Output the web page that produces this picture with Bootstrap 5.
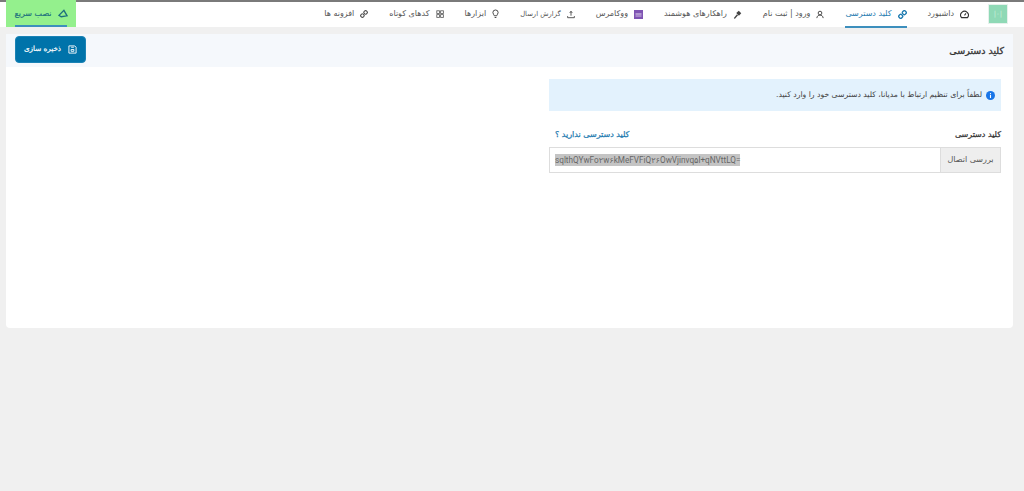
<!doctype html>
<html lang="fa" dir="rtl">
<head>
<meta charset="utf-8">
<title>کلید دسترسی</title>
<link rel="stylesheet" href="https://cdn.jsdelivr.net/npm/bootstrap@5.3.0/dist/css/bootstrap.min.css">
<style>
html,body{height:491px;overflow:hidden}
body{background:#f0f0f0;font-family:"DejaVu Sans",sans-serif;font-size:8px;color:#444}
.top-strip{height:2px;background:#7a7a7a}
.top-nav{height:25px;background:#fff;padding-right:17px}
.logo-box{width:18px;height:18px;background:#8fd9b6;color:#c9efdd;font-size:7px;margin-left:20px;margin-top:3px;outline:1px solid #e6f1ec}
.tab-item{height:26px;margin-left:21px;color:#555;font-size:8px;white-space:nowrap;text-decoration:none;gap:6px;border-bottom:2px solid transparent}
.tab-item.is-on{color:#1f7bb0;border-bottom-color:#3d8fbd}
.tab-item.is-tight{font-size:6.8px}
.tab-item svg{flex:none}
.quick-btn{height:27px;margin-top:-2px;width:70px;margin-right:auto;margin-left:6px;background:#94f08d;color:#1d6f7d;font-size:8px;-webkit-text-stroke:.15px #1d6f7d;text-decoration:none;gap:6px;position:relative}
.quick-btn::after{content:"";position:absolute;left:9px;right:9px;bottom:0;height:2px;background:#3d8fbd}
.panel-wrap{margin:7px 11px 0 6px}
.panel-inner{height:294px;background:#fff;border-radius:0 0 4px 4px}
.panel-head{height:33px;background:#f5f8fc;padding:0 9px}
.panel-title{font-size:9.5px;font-weight:400;-webkit-text-stroke:.3px #333;color:#333;margin:0}
.save-btn{width:71px;height:27px;background:#0073aa;border:1px solid #1b83b5;border-radius:4px;color:#fff;font-size:7.2px;-webkit-text-stroke:.2px #fff;gap:7px;padding:0;margin-top:-2px}
.save-btn:hover{background:#0073aa;color:#fff}
.form-zone{width:452px;margin:12px 12px 0 0}
.info-note{height:32px;background:#e3f2fd;color:#444;font-size:7.7px;padding:0 6px;gap:4px;border-radius:0;border:0;margin:0 0 20px}
.label-line{margin-bottom:8px;height:8px}
.label-line b{color:#333;font-size:8px;font-weight:400;-webkit-text-stroke:.25px #333}
.label-line a{color:#1f7bb0;font-size:8px;-webkit-text-stroke:.25px #1f7bb0;text-decoration:none;padding-left:6px}
.key-group{height:26px}
.check-cell{width:61px;justify-content:center;background:#eee;border:1px solid #ddd;font-size:8px;color:#555;padding:0;border-radius:0 4px 4px 0}
.input-group>.key-field{font-family:Roboto,"DejaVu Sans",sans-serif;font-size:8.2px;color:#666;padding:0 5px;border:1px solid #ddd;border-right:0;border-radius:4px 0 0 4px;height:26px;line-height:24px;box-shadow:none}
.key-field span{background:#c4c4c4;display:inline-block;line-height:12px}
</style>
</head>
<body>
<div class="top-strip"></div>
<nav class="top-nav d-flex align-items-start">
  <div class="logo-box d-flex align-items-center justify-content-center" dir="ltr">|۰|</div>
  <a class="tab-item d-flex align-items-center" href="#"><svg width="9" height="9" viewBox="0 0 10 10" fill="none" stroke="#333" stroke-width="1.200"><path d="M1.700 8.500A4.300 4.300 0 1 1 8.300 8.500Z"/><path d="M5 6l1.600-2.200"/></svg>داشبورد</a>
  <a class="tab-item is-on d-flex align-items-center" href="#"><svg width="9" height="9" viewBox="0 0 10 10" fill="none" stroke="#1f7bb0" stroke-width="1.500"><rect x="1" y="5" width="4" height="4" rx="1.400" transform="rotate(-45 3 7)"/><rect x="5" y="1" width="4" height="4" rx="1.400" transform="rotate(-45 7 3)"/></svg>کلید دسترسی</a>
  <a class="tab-item d-flex align-items-center" href="#"><svg width="8" height="9" viewBox="0 0 10 10" fill="none" stroke="#444" stroke-width="1.200"><circle cx="5" cy="3.200" r="2.300"/><path d="M1 9.500c.4-2.600 2-3.800 4-3.800s3.600 1.200 4 3.800"/></svg>ورود | ثبت نام</a>
  <a class="tab-item d-flex align-items-center" href="#"><svg width="9" height="9" viewBox="0 0 10 10" fill="#444"><path d="M1 9l3.400-4.400 1.200 1.100L2 9.900Z"/><path d="M3.600 3.400 6.400.8l2.800 2.800-2.600 2.800Z"/></svg>راهکارهای هوشمند</a>
  <a class="tab-item d-flex align-items-center" href="#"><svg width="9" height="9" viewBox="0 0 9 9"><rect width="9" height="9" fill="#7f54b3"/><rect x="1.500" y="3.500" width="6" height="1" fill="#e6dcf2"/><rect x="1.500" y="5.500" width="6" height="1" fill="#cdb9e4"/></svg>ووکامرس</a>
  <a class="tab-item is-tight d-flex align-items-center" href="#"><svg width="8" height="9" viewBox="0 0 10 10" fill="none" stroke="#444" stroke-width="1.100"><path d="M5 1v5.500M3.400 3 5 1l1.600 2"/><path d="M.8 7v2h8.400V7"/></svg>گزارش ارسال</a>
  <a class="tab-item d-flex align-items-center" href="#"><svg width="7" height="10" viewBox="0 0 8 10" fill="none" stroke="#444" stroke-width="1.100"><path d="M2.600 7C2.400 5.600 1 5 1 3.400a3 3 0 0 1 6 0C7 5 5.600 5.600 5.400 7Z"/><path d="M3 9h2"/></svg>ابزارها</a>
  <a class="tab-item d-flex align-items-center" href="#"><svg width="8" height="8" viewBox="0 0 10 10" fill="none" stroke="#555" stroke-width="1"><rect x="1" y="1" width="3.400" height="3.400"/><rect x="5.800" y="1" width="3.400" height="3.400"/><rect x="1" y="5.800" width="3.400" height="3.400"/><rect x="5.800" y="5.800" width="3.400" height="3.400"/></svg>کدهای کوتاه</a>
  <a class="tab-item d-flex align-items-center" href="#"><svg width="8" height="8" viewBox="0 0 10 10" fill="none" stroke="#555" stroke-width="1.400"><rect x="1" y="5" width="4" height="4" rx="1.400" transform="rotate(-45 3 7)"/><rect x="5" y="1" width="4" height="4" rx="1.400" transform="rotate(-45 7 3)"/></svg>افزونه ها</a>
  <a class="quick-btn d-flex align-items-center justify-content-center" href="#"><svg width="10" height="10" viewBox="0 0 11 11" fill="none" stroke="#1d6f7d" stroke-width="1.500"><path d="M1 7 6.500 1.500 10 7.500 3.500 8.500Z"/></svg>نصب سریع</a>
</nav>
<main class="panel-wrap">
  <div class="panel-inner">
    <div class="panel-head d-flex align-items-center justify-content-between">
      <h1 class="panel-title">کلید دسترسی</h1>
      <button class="save-btn btn d-flex align-items-center justify-content-center" type="button"><svg width="9" height="9" viewBox="0 0 10 10" fill="none" stroke="#fff" stroke-width="1"><path d="M1 1h6.500L9 2.500V9H1Z"/><path d="M3.500 2.500h3M3.500 5h3v2h-3Z"/></svg>ذخیره سازی</button>
    </div>
    <div class="form-zone">
      <div class="info-note alert d-flex align-items-center" role="alert"><svg width="9" height="9" viewBox="0 0 10 10"><circle cx="5" cy="5" r="5" fill="#1976e8"/><rect x="4.400" y="4.300" width="1.200" height="3.500" fill="#fff"/><rect x="4.400" y="2.300" width="1.200" height="1.200" fill="#fff"/></svg>لطفاً برای تنظیم ارتباط با مدیانا، کلید دسترسی خود را وارد کنید.</div>
      <div class="label-line d-flex align-items-center justify-content-between"><b>کلید دسترسی</b><a href="#">کلید دسترسی ندارید ؟</a></div>
      <div class="input-group key-group">
        <span class="input-group-text check-cell">بررسی اتصال</span>
        <div class="form-control key-field ms-0" dir="ltr"><span>sqlthQYwFo۲w۶kMeFVFiQ۲۶OwVjinvq۵l+qNVttLQ=</span></div>
      </div>
    </div>
  </div>
</main>
</body>
</html>
